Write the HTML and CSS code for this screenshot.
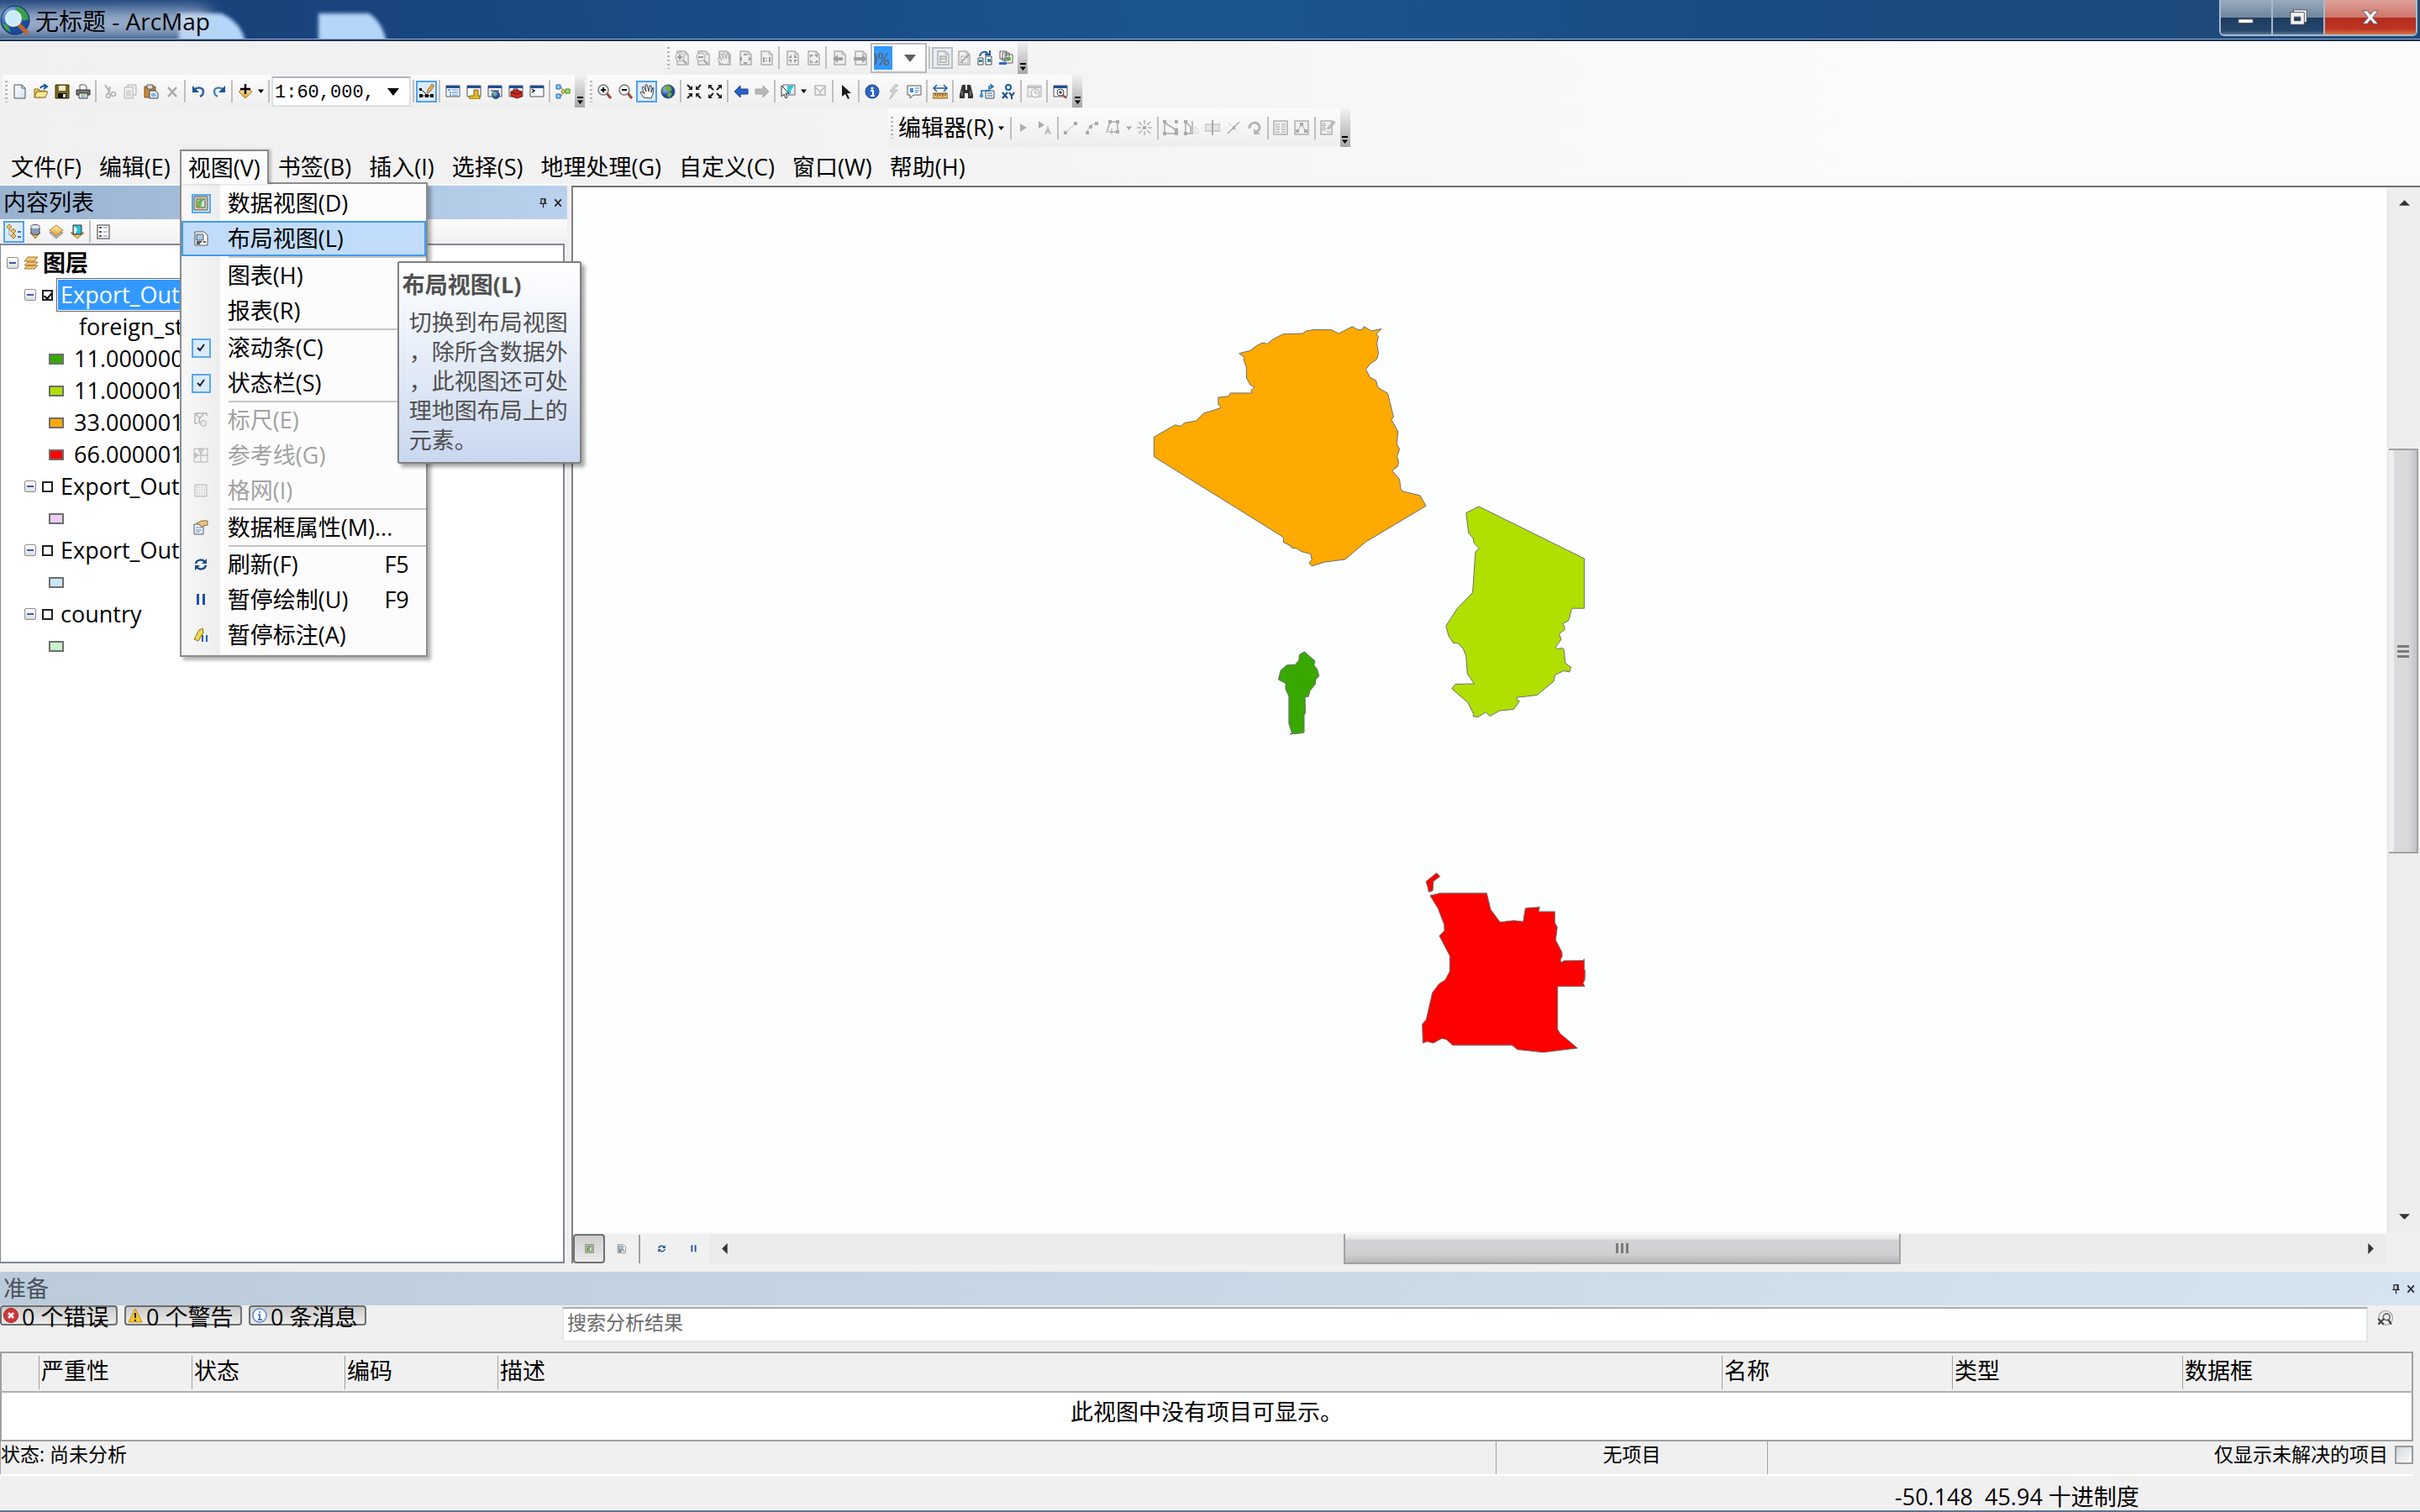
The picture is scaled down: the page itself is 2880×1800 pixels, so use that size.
FILE: index.html
```html
<!DOCTYPE html>
<html lang="zh-CN">
<head>
    <meta charset="UTF-8">
    <meta name="viewport" content="width=device-width, initial-scale=1.0">
    <title>无标题 - ArcMap</title>
    <link rel="stylesheet" href="styles.css">
</head>
<body>
    <!-- Icon library -->
    <svg class="sprite" width="0" height="0" aria-hidden="true">
        <defs>
            <linearGradient id="gold" x1="0" y1="0" x2="0" y2="1"><stop offset="0" stop-color="#fff0b0"/><stop offset="1" stop-color="#e0a030"/></linearGradient>
            <linearGradient id="sheet" x1="0" y1="0" x2="1" y2="1"><stop offset="0" stop-color="#fff"/><stop offset="1" stop-color="#cfe3f5"/></linearGradient>
            <radialGradient id="globe" cx=".35" cy=".3"><stop offset="0" stop-color="#9fd4ff"/><stop offset="1" stop-color="#1b4a9a"/></radialGradient>
        </defs>
        <symbol id="i-new" viewBox="0 0 18 18"><path d="M2 1h9l4 4v12H2z" fill="url(#sheet)" stroke="#555"/><path d="M11 1v4h4" fill="none" stroke="#555"/></symbol>
        <symbol id="i-open" viewBox="0 0 18 18"><path d="M1 16V6h5l1 2h7v8z" fill="#e8c850" stroke="#8a6a1a"/><path d="M1 16l3-7h13l-3 7z" fill="#fbe79a" stroke="#8a6a1a"/><path d="M8 5c1-2 3-3 6-2M12 0l4 3-4 3" fill="none" stroke="#1a5a9c" stroke-width="2"/></symbol>
        <symbol id="i-save" viewBox="0 0 18 18"><path d="M1 1h16v16H1z" fill="#7a6a1c" stroke="#3a3208"/><path d="M5 2h8v6H5z" fill="#f2ecd0"/><path d="M4 11h10v6H4z" fill="#111"/><path d="M10 12h3v4h-3z" fill="#eee"/></symbol>
        <symbol id="i-print" viewBox="0 0 18 18"><path d="M5 7V1h6l2 2v4" fill="#fff" stroke="#555"/><path d="M1 7h16v6H1z" fill="#777" stroke="#333"/><path d="M4 11h10v6H4z" fill="#fff" stroke="#333"/><path d="M6 13h6" stroke="#4aa04a"/><path d="M6 15h6" stroke="#3a7acc"/></symbol>
        <symbol id="i-cut" viewBox="0 0 18 18"><path d="M4 1l6 9M10 3L8 11" stroke="#b2b2b2" stroke-width="2"/><circle cx="14" cy="12" r="2.500" fill="none" stroke="#b2b2b2" stroke-width="1.500"/><circle cx="8" cy="14" r="2.500" fill="none" stroke="#b2b2b2" stroke-width="1.500"/></symbol>
        <symbol id="i-copy" viewBox="0 0 18 18"><path d="M6 1h10v12H6z" fill="#eee" stroke="#b0b0b0"/><path d="M2 4h10v13H2z" fill="#f4f4f4" stroke="#b0b0b0"/><path d="M4 8h6M4 10h6M4 12h6M4 14h6" stroke="#b8b8b8"/></symbol>
        <symbol id="i-paste" viewBox="0 0 18 18"><path d="M1 3h13v13H1z" fill="#c88a3c" stroke="#7a4a10"/><path d="M4 1h7v5H4z" fill="#ddd" stroke="#555"/><path d="M7 8h7l3 3v6H7z" fill="#e4f1fc" stroke="#445"/><path d="M9 12h5M9 14h6" stroke="#3a7acc"/></symbol>
        <symbol id="i-del" viewBox="0 0 18 18"><path d="M4 4l10 11M14 4L4 15" stroke="#a8a8a8" stroke-width="2.500"/></symbol>
        <symbol id="i-undo" viewBox="0 0 18 18"><path d="M4 7c4-4 11-3 11 2 0 3-2 5-4 6" fill="none" stroke="#2a62a4" stroke-width="2.500"/><path d="M2 2v8h8z" fill="#1a5296"/></symbol>
        <symbol id="i-redo" viewBox="0 0 18 18"><path d="M14 7C10 3 3 4 3 9c0 3 2 5 4 6" fill="none" stroke="#4a86ba" stroke-width="2.500"/><path d="M16 2v8H8z" fill="#1a5296"/></symbol>
        <symbol id="i-add" viewBox="0 0 18 18"><path d="M1 9l8-4 8 4-8 8z" fill="url(#gold)" stroke="#a87820"/><path d="M9 0v12M3 6h12" stroke="#000" stroke-width="2.500"/></symbol>
        <symbol id="i-edit" viewBox="0 0 18 18"><path d="M2 6l7 7M2 14h13" fill="none" stroke="#222"/><path d="M0 5h3v3H0zM0 12h4v4H0zM7 12h4v4H7zM13 12h4v4h-4z" fill="#111"/><path d="M9 11l1-4 5-7 3 2-5 7z" fill="#e8a850" stroke="#9a6020" stroke-width=".8"/></symbol>
        <symbol id="i-win" viewBox="0 0 18 18"><path d="M1 2h16v13H1z" fill="#f6f8fb" stroke="#555"/><path d="M1 2h16v3H1z" fill="#1f4f96"/></symbol>
        <symbol id="i-toc" viewBox="0 0 18 18"><use href="#i-win"/><path d="M3 7h3M5 10h2M5 13h2" stroke="#3a7acc" stroke-width="1.500"/><path d="M8 7h7M8 10h7M8 13h7" stroke="#3a8adc"/></symbol>
        <symbol id="i-catalog" viewBox="0 0 18 18"><use href="#i-win"/><path d="M9 7h5v7h2v4H4v-4h5z" fill="#e0b820" stroke="#8a6a10"/></symbol>
        <symbol id="i-search" viewBox="0 0 18 18"><use href="#i-win"/><path d="M4 8h10" stroke="#888" stroke-width="2"/><circle cx="10" cy="13" r="4.500" fill="url(#globe)" stroke="#357"/><path d="M8 11l3 1-1 4z" fill="#6ab83a"/></symbol>
        <symbol id="i-toolbox" viewBox="0 0 18 18"><use href="#i-win"/><path d="M3 9l7-2 6 2v6l-6 2-7-3z" fill="#cc2a20" stroke="#7a1410"/><path d="M6 8V6h5v2M3 10l7 2 6-2" fill="none" stroke="#611"/></symbol>
        <symbol id="i-python" viewBox="0 0 18 18"><use href="#i-win"/><path d="M3 6l3 2-3 2" fill="none" stroke="#111" stroke-width="1.500"/></symbol>
        <symbol id="i-model" viewBox="0 0 18 18"><path d="M4 4h3l4 5h3M4 14h3l3-5" fill="none" stroke="#777"/><path d="M1 1h5v5H1zM1 12h5v5H1z" fill="#8cc8f8" stroke="#1a6aae"/><path d="M12 6h5v5h-5z" fill="#a4e070" stroke="#3a8a1a"/><circle cx="9" cy="9" r="2" fill="#f6d860" stroke="#977a10"/></symbol>
        <symbol id="i-lens" viewBox="0 0 18 18"><path d="M11 11l5 6" stroke="#a0402c" stroke-width="3"/><circle cx="7" cy="7" r="6" fill="#f4f6f8" stroke="#777" stroke-width="1.500"/></symbol>
        <symbol id="i-zin" viewBox="0 0 18 18"><use href="#i-lens"/><path d="M7 4v6M4 7h6" stroke="#111" stroke-width="2"/></symbol>
        <symbol id="i-zout" viewBox="0 0 18 18"><use href="#i-lens"/><path d="M4 7h6" stroke="#111" stroke-width="2"/></symbol>
        <symbol id="i-hand" viewBox="0 0 18 18"><path d="M5 16L1 10l2-1 3 3L3 4l2-1 3 6-1-8h2l2 8 1-7h2v8l2-6 1 1-1 7-2 5z" fill="#fff" stroke="#444"/></symbol>
        <symbol id="i-globe" viewBox="0 0 18 18"><circle cx="9" cy="9" r="8" fill="url(#globe)" stroke="#456"/><path d="M5 3c4-2 9 1 8 5l-4 1-4-3zM10 10l4 1-3 5-3-2z" fill="#7cae38"/></symbol>
        <symbol id="i-fixin" viewBox="0 0 18 18"><path d="M1 1l5 5M17 1l-5 5M1 17l5-5M17 17l-5-5" stroke="#222" stroke-width="2"/><path d="M7 2v5H2zM11 2v5h5zM7 16v-5H2zM11 16v-5h5z" fill="#222"/></symbol>
        <symbol id="i-fixout" viewBox="0 0 18 18"><path d="M2 2l5 5M16 2l-5 5M2 16l5-5M16 16l-5-5" stroke="#222" stroke-width="2"/><path d="M1 6V1h5zM17 6V1h-5zM1 12v5h5zM17 12v5h-5z" fill="#222"/></symbol>
        <symbol id="i-back" viewBox="0 0 18 18"><path d="M1 9l7-7v4h9v6H8v4z" fill="#2a62c8" stroke="#1a3a88"/></symbol>
        <symbol id="i-fwd" viewBox="0 0 18 18"><path d="M17 9l-7-7v4H1v6h9v4z" fill="#b8b8b8" stroke="#a6a6a6"/></symbol>
        <symbol id="i-select" viewBox="0 0 18 18"><path d="M3 1h14v12H3z" fill="#eee" stroke="#666"/><path d="M8 2h8l-4 6v4H8z" fill="#30c8e0"/><path d="M1 2v13l3-3 2 5 2-1-2-5h4z" fill="#fff" stroke="#333"/></symbol>
        <symbol id="i-clear" viewBox="0 0 18 18"><path d="M3 2h12v11H3zM3 4l6 5 6-6M9 9v4" fill="none" stroke="#b8b8b8" stroke-width="1.500"/></symbol>
        <symbol id="i-arrow" viewBox="0 0 18 18"><path d="M4 1v14l4-3 3 6 2-1-3-6h5z" fill="#1b1b1b"/></symbol>
        <symbol id="i-info" viewBox="0 0 18 18"><circle cx="9" cy="9" r="8" fill="#2a66c0" stroke="#1a3f86"/><circle cx="9" cy="5" r="1.500" fill="#fff"/><path d="M7 8h3v6M7 14h5" fill="none" stroke="#fff" stroke-width="2"/></symbol>
        <symbol id="i-bolt" viewBox="0 0 18 18"><path d="M11 1L5 9h4l-4 9 9-11H9l6-6z" fill="#ddd" stroke="#b0b0b0"/></symbol>
        <symbol id="i-popup" viewBox="0 0 18 18"><path d="M1 2h16v11H8l-4 4v-4H1z" fill="#fff" stroke="#555"/><path d="M4 5h4v5H4z" fill="#3a8ada"/><path d="M10 5h5M10 8h5M10 10h3" stroke="#3a7acc"/></symbol>
        <symbol id="i-measure" viewBox="0 0 18 18"><path d="M0 11h18v6H0z" fill="#e8b870" stroke="#8a5a20"/><path d="M3 11v3M6 11v4M9 11v3M12 11v4M15 11v3" stroke="#5a3a10"/><path d="M2 5h14M5 1L1 5l4 4M13 1l4 4-4 4" fill="none" stroke="#1a5a9c" stroke-width="1.500"/></symbol>
        <symbol id="i-find" viewBox="0 0 18 18"><path d="M4 1h4v6h2V1h4l3 12v4h-6v-6H7v6H1v-4z" fill="#333"/><path d="M4 8v6M14 8v6" stroke="#999"/></symbol>
        <symbol id="i-route" viewBox="0 0 18 18"><path d="M7 8h10v9H7z" fill="#e8f2fb" stroke="#456"/><path d="M9 11h6M9 14h6" stroke="#567"/><path d="M2 14V8h9V3h4M12 0l4 3-4 3" fill="none" stroke="#1a6aae" stroke-width="1.500"/><path d="M0 12h4v4H0z" fill="#49c"/></symbol>
        <symbol id="i-xy" viewBox="0 0 18 18"><circle cx="9" cy="4" r="3" fill="#dff" stroke="#1a5a9c" stroke-width="2"/><path d="M2 10l6 7M8 10l-6 7M10 10l3 4 3-4M13 13v5" fill="none" stroke="#1a4a86" stroke-width="2"/></symbol>
        <symbol id="i-time" viewBox="0 0 18 18"><path d="M1 2h16v13H1z" fill="#eee" stroke="#b0b0b0"/><path d="M1 3h16v2H1z" fill="#c0c0c0"/><circle cx="10" cy="11" r="5" fill="#f2f2f2" stroke="#aaa"/><path d="M10 8v3h3" fill="none" stroke="#aaa"/></symbol>
        <symbol id="i-viewer" viewBox="0 0 18 18"><use href="#i-win"/><path d="M11 12l5 5" stroke="#a0402c" stroke-width="2"/><circle cx="9" cy="10" r="4" fill="#fff" stroke="#444"/><path d="M9 8v4M7 10h4" stroke="#111"/></symbol>
        <symbol id="i-page" viewBox="0 0 18 18"><path d="M3 1h9l4 4v12H3z" fill="#efefef" stroke="#b0b0b0" stroke-width="1.500"/><path d="M12 1v4h4" fill="none" stroke="#b0b0b0"/></symbol>
        <symbol id="i-pzin" viewBox="0 0 18 18"><use href="#i-page"/><circle cx="6" cy="8" r="5" fill="#eee" stroke="#a0a0a0"/><path d="M6 5v6M3 8h6M10 12l4 4" stroke="#999" stroke-width="2"/></symbol>
        <symbol id="i-pzout" viewBox="0 0 18 18"><use href="#i-page"/><circle cx="6" cy="8" r="5" fill="#eee" stroke="#a0a0a0"/><path d="M3 8h6M10 12l4 4" stroke="#999" stroke-width="2"/></symbol>
        <symbol id="i-phand" viewBox="0 0 18 18"><use href="#i-page"/><path d="M5 16L1 10l2-1 3 3L3 5l2-1 3 6-1-7h2l2 7 1-6h2v7l2-5-1 6-2 5z" fill="#eee" stroke="#aaa"/></symbol>
        <symbol id="i-pfull" viewBox="0 0 18 18"><use href="#i-page"/><path d="M9 3l3 3H6zM9 17l3-3H6zM2 10l3-3v6zM16 10l-3-3v6z" fill="#999"/></symbol>
        <symbol id="i-p11" viewBox="0 0 18 18"><use href="#i-page"/><path d="M6 8v6M13 8v6M9 9v1M9 12v1" stroke="#999" stroke-width="2"/></symbol>
        <symbol id="i-pin" viewBox="0 0 18 18"><use href="#i-page"/><path d="M8 5v4H4zM11 5v4h4zM8 15v-4H4zM11 15v-4h4z" fill="#999"/></symbol>
        <symbol id="i-pout" viewBox="0 0 18 18"><use href="#i-page"/><path d="M5 9V5h4zM14 9V5h-4zM5 11v4h4zM14 11v4h-4z" fill="#999"/></symbol>
        <symbol id="i-pback" viewBox="0 0 18 18"><use href="#i-page"/><path d="M1 10l6-5v3h6v4H7v3z" fill="#a0a0a0"/></symbol>
        <symbol id="i-pfwd" viewBox="0 0 18 18"><use href="#i-page"/><path d="M17 10l-6-5v3H1v4h10v3z" fill="#a0a0a0"/></symbol>
        <symbol id="i-pdraft" viewBox="0 0 18 18"><use href="#i-page"/><path d="M6 7h7v7H6zM7 10h5" fill="none" stroke="#aaa" stroke-width="1.500"/></symbol>
        <symbol id="i-pfocus" viewBox="0 0 18 18"><use href="#i-page"/><path d="M6 7h8v8H6z" fill="none" stroke="#999" stroke-dasharray="2 1"/><path d="M5 15L15 5" stroke="#aaa" stroke-width="2"/></symbol>
        <symbol id="i-swap" viewBox="0 0 18 18"><path d="M1 9h6v8H1zM10 7h7v10h-7z" fill="#fff" stroke="#444"/><path d="M12 10h4v4h-4zM2 11h4v3H2z" fill="#38a"/><path d="M3 7c1-6 8-7 10-2M9 5h6V0" fill="none" stroke="#1a5a9c" stroke-width="2"/></symbol>
        <symbol id="i-ddp" viewBox="0 0 18 18"><path d="M2 1h8v9H2zM5 3h8v9H5zM8 5h9v10H8z" fill="#fff" stroke="#555"/><path d="M10 8h5v4h-5z" fill="#6a4"/><path d="M1 14h9v3H1z" fill="#2a6ad0"/></symbol>
        <symbol id="i-e1" viewBox="0 0 18 18"><path d="M5 4v10l8-5z" fill="#b0b0b0"/></symbol>
        <symbol id="i-e2" viewBox="0 0 18 18"><path d="M2 1v9l7-4z" fill="#aaa"/><path d="M10 17l3-8 3 8M11 14h4" fill="none" stroke="#bbb" stroke-width="2"/></symbol>
        <symbol id="i-e3" viewBox="0 0 18 18"><path d="M3 15L15 4" stroke="#bbb"/><path d="M1 13h4v4H1zM13 2h4v4h-4z" fill="#aaa"/></symbol>
        <symbol id="i-e4" viewBox="0 0 18 18"><path d="M4 15c0-5 4-11 12-11" fill="none" stroke="#bbb"/><path d="M2 13h4v4H2zM13 2h4v4h-4zM6 6h4v4H6z" fill="#aaa"/></symbol>
        <symbol id="i-e5" viewBox="0 0 18 18"><path d="M2 15L6 2h9v12h-3" fill="none" stroke="#aaa" stroke-width="1.500"/><path d="M4 0h4v4H4zM13 0h4v4h-4zM13 12h4v4h-4z" fill="#aaa"/><path d="M8 10v7M4 14h8" stroke="#999"/></symbol>
        <symbol id="i-e6" viewBox="0 0 18 18"><path d="M9 0v5M9 13v5M0 9h5M13 9h5M2 2l4 4M12 12l4 4M16 2l-4 4M6 12l-4 4" stroke="#b0b0b0" stroke-width="1.500"/><path d="M7 7h4v4H7z" fill="#aaa"/></symbol>
        <symbol id="i-e7" viewBox="0 0 18 18"><path d="M2 2v14h14V12L2 3" fill="none" stroke="#aaa" stroke-width="1.500"/><path d="M2 2h14v10" fill="none" stroke="#bbb" stroke-dasharray="1 2"/><path d="M0 0h4v4H0zM14 0h4v4h-4zM14 10h4v4h-4zM0 14h4v4H0zM14 14h4v4h-4z" fill="#aaa"/></symbol>
        <symbol id="i-e8" viewBox="0 0 18 18"><path d="M2 16V2l6 6v8zM10 1v16" fill="none" stroke="#aaa" stroke-width="1.500"/><path d="M13 8l4 3v5h-4z" fill="none" stroke="#bbb" stroke-dasharray="1 1"/><path d="M0 0h4v4H0zM0 14h4v4H0z" fill="#aaa"/></symbol>
        <symbol id="i-e9" viewBox="0 0 18 18"><path d="M0 5h18v8H0z" fill="#e4e4e4" stroke="#b0b0b0"/><path d="M9 0v18" stroke="#aaa" stroke-width="2"/></symbol>
        <symbol id="i-e10" viewBox="0 0 18 18"><path d="M2 16L16 2" stroke="#aaa" stroke-width="1.500"/><path d="M3 3l12 12" stroke="#bbb" stroke-dasharray="5 3"/><path d="M8 7h3v4H8z" fill="#aaa"/></symbol>
        <symbol id="i-e11" viewBox="0 0 18 18"><path d="M3 10c-1-9 12-9 12-1 0 3-2 4-4 5" fill="none" stroke="#b4b4b4" stroke-width="3"/><path d="M8 10v7h8z" fill="#b4b4b4"/></symbol>
        <symbol id="i-e12" viewBox="0 0 18 18"><path d="M1 1h16v16H1z" fill="#f0f0f0" stroke="#b0b0b0" stroke-width="1.500"/><path d="M3 5h5M3 8h5M3 11h5M3 14h5M10 5h5M10 8h5M10 11h5M10 14h5" stroke="#bbb" stroke-width="1.500"/></symbol>
        <symbol id="i-e13" viewBox="0 0 18 18"><path d="M1 1h16v16H1z" fill="#f0f0f0" stroke="#b0b0b0" stroke-width="1.500"/><path d="M4 13l5-8 5 8" fill="none" stroke="#aaa"/><path d="M2 11h4v4H2zM7 3h4v4H7zM12 11h4v4h-4z" fill="#aaa"/></symbol>
        <symbol id="i-e14" viewBox="0 0 18 18"><path d="M1 1h13v16H1z" fill="#f0f0f0" stroke="#b0b0b0" stroke-width="1.500"/><path d="M3 4h3v3H3zM3 9h3v3H3zM8 10h4M8 14h4" fill="none" stroke="#aaa"/><path d="M9 9l7-8 2 2-7 7z" fill="#c4c4c4" stroke="#aaa"/></symbol>
        <symbol id="i-diamond" viewBox="0 0 18 18"><path d="M1 10l8-6 8 6-8 7z" fill="#b8b8b8" stroke="#888"/><path d="M1 7l8-6 8 6-8 7z" fill="url(#gold)" stroke="#b0802a"/></symbol>
        <symbol id="i-bytree" viewBox="0 0 18 18"><path d="M3 5v8h5M3 7h4" fill="none" stroke="#999"/><path d="M0 3l3-3 3 3-3 3zM5 8l3-3 3 3-3 3zM5 14l3-3 3 3-3 3z" fill="#eec060" stroke="#a87820"/><path d="M13 9h4M13 15h4" stroke="#2a7aba" stroke-width="2"/></symbol>
        <symbol id="i-bysource" viewBox="0 0 18 18"><path d="M3 10l6 7 6-7z" fill="#e8b850" stroke="#a87820"/><path d="M4 2c2-2 8-2 10 0v9c-2 2-8 2-10 0z" fill="#8a9cb8" stroke="#445"/><ellipse cx="9" cy="3" rx="5" ry="2" fill="#dfe8f2"/></symbol>
        <symbol id="i-bysel" viewBox="0 0 18 18"><path d="M1 10l8 7 8-7z" fill="#eec060" stroke="#a87820"/><path d="M4 1h10v11H4z" fill="#2ac0da" stroke="#333"/><path d="M5 2l4 4-2 5H5z" fill="#eee"/></symbol>
        <symbol id="i-options" viewBox="0 0 18 18"><path d="M2 1h14v16H2z" fill="#fff" stroke="#777" stroke-width="1.500"/><path d="M4 4h3M4 9h3M4 14h3" stroke="#555" stroke-width="2"/><path d="M9 4h5M9 9h5M9 14h5" stroke="#6a8ab0"/></symbol>
        <symbol id="i-layers" viewBox="0 0 18 18"><path d="M1 16l4-4h12l-4 4zM1 12l4-4h12l-4 4zM1 7l4-5h12l-4 5z" fill="#f2c878" stroke="#a8702a"/></symbol>
        <symbol id="i-dataview" viewBox="0 0 18 18"><path d="M1 1h16v16H1z" fill="#d8cfae" stroke="#555"/><path d="M4 4h10v10H4z" fill="#c4e8f8" stroke="#555"/><path d="M4 14V7l4-2 5-1-3 4-1 6z" fill="#7aae40"/></symbol>
        <symbol id="i-layout" viewBox="0 0 18 18"><path d="M2 1h11l4 4v12H2z" fill="#fff" stroke="#555"/><path d="M4 4h8v7H4z" fill="#a8cce8" stroke="#555"/><path d="M4 13h6M4 15h4M12 13h3" stroke="#222" stroke-width="1.500"/></symbol>
        <symbol id="i-ruler" viewBox="0 0 18 18"><path d="M2 1h14v3M2 1v12h3M3 2l5 5 4-5M7 7v5l5 3" fill="none" stroke="#b4b4b4" stroke-width="1.500"/><circle cx="12" cy="13" r="3.500" fill="#eee" stroke="#b0b0b0"/></symbol>
        <symbol id="i-guide" viewBox="0 0 18 18"><path d="M1 1h16v16H1z" fill="#f0f0f0" stroke="#b4b4b4"/><path d="M9 2v15M1 9h16M6 2h6L9 7zM2 6v6l4-3z" fill="none" stroke="#b0b0b0"/></symbol>
        <symbol id="i-grid" viewBox="0 0 18 18"><path d="M2 2h14v14H2z" fill="#eee" stroke="#b4b4b4"/><path d="M4 5h10M4 8h10M4 11h10M4 14h10" stroke="#bbb" stroke-dasharray="1 2"/></symbol>
        <symbol id="i-props" viewBox="0 0 18 18"><path d="M1 5h11v12H1z" fill="#e8f2fc" stroke="#556"/><path d="M3 9h7M3 12h7M3 14h5" stroke="#6a92c0"/><path d="M4 4l6-3h7v5l-5 1-2 2-2-3z" fill="#ecc080" stroke="#8a6a3a"/></symbol>
        <symbol id="i-refresh" viewBox="0 0 18 18"><path d="M3 8c1-5 8-6 11-2M15 10c-1 5-8 6-11 2" fill="none" stroke="#1a4f8a" stroke-width="2.500"/><path d="M16 2v6h-6zM2 16v-6h6z" fill="#1a4f8a"/></symbol>
        <symbol id="i-pause" viewBox="0 0 18 18"><path d="M4 2h3v13H4zM11 2h3v13h-3z" fill="#1f50a8"/></symbol>
        <symbol id="i-plabel" viewBox="0 0 18 18"><path d="M1 14L7 3l4-2 1 5-6 10z" fill="#f0d850" stroke="#8a7010"/><path d="M10 9h2v8h-2zM15 9h2v8h-2z" fill="#1f60c0"/></symbol>
        <symbol id="i-check" viewBox="0 0 18 18"><path d="M5 9l3 3 5-7" fill="none" stroke="#0b2040" stroke-width="2"/></symbol>
        <symbol id="i-thumb" viewBox="0 0 18 18"><path d="M6 10V3h6v7M4 10h10M9 10v6M11 3v7" fill="none" stroke="#222" stroke-width="1.500"/></symbol>
        <symbol id="i-x" viewBox="0 0 18 18"><path d="M4 4l9 10M13 4L4 14" stroke="#222" stroke-width="2"/></symbol>
        <symbol id="i-caret" viewBox="0 0 18 18"><path d="M2 5h14l-7 9z" fill="currentColor"/></symbol>
        <symbol id="i-error" viewBox="0 0 18 18"><circle cx="9" cy="9" r="8.500" fill="#d03838" stroke="#a01a1a"/><path d="M6 6l6 6M12 6l-6 6" stroke="#fff" stroke-width="2.500"/></symbol>
        <symbol id="i-warn" viewBox="0 0 18 18"><path d="M9 1l8 16H1z" fill="#f8c830" stroke="#c08a10"/><path d="M9 6v6M9 14v2" stroke="#111" stroke-width="2"/></symbol>
        <symbol id="i-msg" viewBox="0 0 18 18"><circle cx="9" cy="9" r="8" fill="#fff" stroke="#5a8ad0" stroke-width="1.500"/><path d="M9 4v2M7 8h2v6M7 14h5" fill="none" stroke="#2a5ab8" stroke-width="1.500"/></symbol>
        <symbol id="i-clearfind" viewBox="0 0 18 18"><circle cx="10" cy="8" r="7.500" fill="#eee" stroke="#999"/><circle cx="11" cy="7" r="3.500" fill="none" stroke="#666" stroke-width="1.500"/><path d="M13 10l3 5M2 9l6 6M8 9l-6 6" stroke="#444" stroke-width="2"/></symbol>
    </svg>

    <!-- Title bar -->
    <header class="titlebar">
        <svg class="titlebar-glass" width="520" height="48" aria-hidden="true">
            <defs><filter id="soft" x="-20%" y="-50%" width="140%" height="200%"><feGaussianBlur stdDeviation="9"/></filter><filter id="edge"><feGaussianBlur stdDeviation="2"/></filter></defs>
            <path d="M213 50V16h50q24 10 29 34zM379 50V16h60q16 10 21 34z" fill="#b4d6fa" filter="url(#edge)"/>
            <rect x="-20" y="10" width="272" height="34" rx="16" fill="#c3d2e6" opacity=".75" filter="url(#soft)"/>
        </svg>
        <svg class="app-icon" viewBox="0 0 36 36" aria-hidden="true">
            <circle cx="18" cy="18" r="17" fill="url(#globe)" stroke="#0d2f60"/>
            <path d="M20 2c8 1 14 8 14 15l-6 2-4-7-6-3zM3 22l6 2 4 8c-5-1-9-5-10-10z" fill="#3ba04a"/>
            <path d="M22 23l11 11" stroke="#c0622a" stroke-width="5"/>
            <circle cx="16" cy="16" r="9" fill="#c8ecf8" stroke="#e8eef4" stroke-width="2"/>
        </svg>
        <h1>无标题 - ArcMap</h1>
        <div class="window-buttons">
            <button type="button" class="win-min" aria-label="最小化"><svg viewBox="0 0 24 24"><path d="M2 14h19v5H2z" fill="#fff" stroke="#445"/></svg></button>
            <button type="button" class="win-restore" aria-label="还原"><svg viewBox="0 0 24 24"><path d="M6 2h17v16h-4V6H6z" fill="#fff" stroke="#445"/><path d="M2 5h18v16H2zM7 11v5h8v-5z" fill="#f2f2f2" stroke="#445" fill-rule="evenodd"/></svg></button>
            <button type="button" class="win-close" aria-label="关闭"><svg viewBox="0 0 24 24"><path d="M2 3h6l4 5 4-5h6l-7 9 7 8h-6l-4-5-4 5H2l7-8z" fill="#f4f4f4" stroke="#556"/></svg></button>
        </div>
    </header>

    <!-- Toolbars -->
    <div class="toolbars">
        <div class="toolbar toolbar-layout">
            <span class="grip"></span>
            <button type="button" aria-label="页面放大"><svg><use href="#i-pzin"/></svg></button>
            <button type="button" aria-label="页面缩小"><svg><use href="#i-pzout"/></svg></button>
            <button type="button" aria-label="页面平移"><svg><use href="#i-phand"/></svg></button>
            <button type="button" aria-label="缩放整页"><svg><use href="#i-pfull"/></svg></button>
            <button type="button" aria-label="缩放至 100%"><svg><use href="#i-p11"/></svg></button>
            <span class="sep"></span>
            <button type="button" aria-label="固定比例放大"><svg><use href="#i-pin"/></svg></button>
            <button type="button" aria-label="固定比例缩小"><svg><use href="#i-pout"/></svg></button>
            <span class="sep"></span>
            <button type="button" aria-label="返回"><svg><use href="#i-pback"/></svg></button>
            <button type="button" aria-label="前进"><svg><use href="#i-pfwd"/></svg></button>
            <span class="combo combo-percent"><select aria-label="页面缩放"><option>0%</option></select><svg><use href="#i-caret"/></svg></span>
            <span class="sep"></span>
            <button type="button" class="pressed-off" aria-label="草图模式"><svg><use href="#i-pdraft"/></svg></button>
            <button type="button" aria-label="聚焦数据框"><svg><use href="#i-pfocus"/></svg></button>
            <button type="button" aria-label="更改布局"><svg><use href="#i-swap"/></svg></button>
            <button type="button" aria-label="数据驱动页面"><svg><use href="#i-ddp"/></svg></button>
            <button type="button" class="overflow" aria-label="更多"><i></i><svg><use href="#i-caret"/></svg></button>
        </div>

        <div class="toolbar-row">
            <div class="toolbar">
                <span class="grip"></span>
                <button type="button" aria-label="新建"><svg><use href="#i-new"/></svg></button>
                <button type="button" aria-label="打开"><svg><use href="#i-open"/></svg></button>
                <button type="button" aria-label="保存"><svg><use href="#i-save"/></svg></button>
                <button type="button" aria-label="打印"><svg><use href="#i-print"/></svg></button>
                <span class="sep"></span>
                <button type="button" aria-label="剪切"><svg><use href="#i-cut"/></svg></button>
                <button type="button" aria-label="复制"><svg><use href="#i-copy"/></svg></button>
                <button type="button" aria-label="粘贴"><svg><use href="#i-paste"/></svg></button>
                <button type="button" aria-label="删除"><svg><use href="#i-del"/></svg></button>
                <span class="sep"></span>
                <button type="button" aria-label="撤消"><svg><use href="#i-undo"/></svg></button>
                <button type="button" aria-label="恢复"><svg><use href="#i-redo"/></svg></button>
                <span class="sep"></span>
                <button type="button" aria-label="添加数据"><svg><use href="#i-add"/></svg></button>
                <button type="button" class="drop" aria-label="添加数据选项"><svg><use href="#i-caret"/></svg></button>
                <span class="sep"></span>
                <span class="combo combo-scale"><select aria-label="地图比例"><option>1:60,000,</option></select><svg><use href="#i-caret"/></svg></span>
                <span class="sep"></span>
                <button type="button" class="pressed" aria-label="编辑器工具条"><svg><use href="#i-edit"/></svg></button>
                <span class="sep"></span>
                <button type="button" aria-label="内容列表"><svg><use href="#i-toc"/></svg></button>
                <button type="button" aria-label="目录"><svg><use href="#i-catalog"/></svg></button>
                <button type="button" aria-label="搜索"><svg><use href="#i-search"/></svg></button>
                <button type="button" aria-label="工具箱"><svg><use href="#i-toolbox"/></svg></button>
                <button type="button" aria-label="Python"><svg><use href="#i-python"/></svg></button>
                <span class="sep"></span>
                <button type="button" aria-label="模型构建器"><svg><use href="#i-model"/></svg></button>
                <button type="button" class="overflow" aria-label="更多"><i></i><svg><use href="#i-caret"/></svg></button>
            </div>
            <div class="toolbar">
                <span class="grip"></span>
                <button type="button" aria-label="放大"><svg><use href="#i-zin"/></svg></button>
                <button type="button" aria-label="缩小"><svg><use href="#i-zout"/></svg></button>
                <button type="button" class="pressed" aria-label="平移"><svg><use href="#i-hand"/></svg></button>
                <button type="button" aria-label="全图"><svg><use href="#i-globe"/></svg></button>
                <span class="sep"></span>
                <button type="button" aria-label="固定比例放大"><svg><use href="#i-fixin"/></svg></button>
                <button type="button" aria-label="固定比例缩小"><svg><use href="#i-fixout"/></svg></button>
                <span class="sep"></span>
                <button type="button" aria-label="返回"><svg><use href="#i-back"/></svg></button>
                <button type="button" aria-label="前进"><svg><use href="#i-fwd"/></svg></button>
                <span class="sep"></span>
                <button type="button" aria-label="选择要素"><svg><use href="#i-select"/></svg></button>
                <button type="button" class="drop" aria-label="选择方式"><svg><use href="#i-caret"/></svg></button>
                <button type="button" aria-label="清除所选"><svg><use href="#i-clear"/></svg></button>
                <span class="sep"></span>
                <button type="button" aria-label="选择元素"><svg><use href="#i-arrow"/></svg></button>
                <span class="sep"></span>
                <button type="button" aria-label="识别"><svg><use href="#i-info"/></svg></button>
                <button type="button" aria-label="超链接"><svg><use href="#i-bolt"/></svg></button>
                <button type="button" aria-label="HTML 弹出窗口"><svg><use href="#i-popup"/></svg></button>
                <span class="sep"></span>
                <button type="button" aria-label="测量"><svg><use href="#i-measure"/></svg></button>
                <span class="sep"></span>
                <button type="button" aria-label="查找"><svg><use href="#i-find"/></svg></button>
                <button type="button" aria-label="查找路径"><svg><use href="#i-route"/></svg></button>
                <button type="button" aria-label="转到 XY"><svg><use href="#i-xy"/></svg></button>
                <span class="sep"></span>
                <button type="button" aria-label="时间滑块"><svg><use href="#i-time"/></svg></button>
                <span class="sep"></span>
                <button type="button" aria-label="创建查看器"><svg><use href="#i-viewer"/></svg></button>
                <button type="button" class="overflow" aria-label="更多"><i></i><svg><use href="#i-caret"/></svg></button>
            </div>
        </div>

        <div class="toolbar toolbar-editor">
            <span class="grip"></span>
            <button type="button" class="text-button">编辑器(R)<svg><use href="#i-caret"/></svg></button>
            <span class="sep"></span>
            <button type="button" aria-label="编辑工具"><svg><use href="#i-e1"/></svg></button>
            <button type="button" aria-label="编辑注记"><svg><use href="#i-e2"/></svg></button>
            <span class="sep"></span>
            <button type="button" aria-label="直线段"><svg><use href="#i-e3"/></svg></button>
            <button type="button" aria-label="弧线段"><svg><use href="#i-e4"/></svg></button>
            <button type="button" aria-label="追踪"><svg><use href="#i-e5"/></svg></button>
            <button type="button" class="drop muted" aria-label="追踪选项"><svg><use href="#i-caret"/></svg></button>
            <button type="button" aria-label="点"><svg><use href="#i-e6"/></svg></button>
            <span class="sep"></span>
            <button type="button" aria-label="编辑折点"><svg><use href="#i-e7"/></svg></button>
            <button type="button" aria-label="整形要素"><svg><use href="#i-e8"/></svg></button>
            <button type="button" aria-label="裁剪面"><svg><use href="#i-e9"/></svg></button>
            <button type="button" aria-label="分割"><svg><use href="#i-e10"/></svg></button>
            <button type="button" aria-label="旋转"><svg><use href="#i-e11"/></svg></button>
            <span class="sep"></span>
            <button type="button" aria-label="属性"><svg><use href="#i-e12"/></svg></button>
            <button type="button" aria-label="草图属性"><svg><use href="#i-e13"/></svg></button>
            <span class="sep"></span>
            <button type="button" aria-label="创建要素"><svg><use href="#i-e14"/></svg></button>
            <button type="button" class="overflow" aria-label="更多"><i></i><svg><use href="#i-caret"/></svg></button>
        </div>

        <nav class="menubar">
            <button type="button">文件(F)</button>
            <button type="button">编辑(E)</button>
            <div class="menu-open">
                <button type="button" class="active">视图(V)</button>
                <div class="menu" role="menu">
                    <button type="button" role="menuitem"><span class="mi boxed"><svg><use href="#i-dataview"/></svg></span>数据视图(D)</button>
                    <button type="button" role="menuitem" class="hover"><span class="mi"><svg><use href="#i-layout"/></svg></span>布局视图(L)</button>
                    <hr>
                    <button type="button" role="menuitem"><span class="mi"></span>图表(H)</button>
                    <button type="button" role="menuitem"><span class="mi"></span>报表(R)</button>
                    <hr>
                    <button type="button" role="menuitemcheckbox" aria-checked="true"><span class="mi boxed"><svg><use href="#i-check"/></svg></span>滚动条(C)</button>
                    <button type="button" role="menuitemcheckbox" aria-checked="true"><span class="mi boxed"><svg><use href="#i-check"/></svg></span>状态栏(S)</button>
                    <hr>
                    <button type="button" role="menuitem" disabled><span class="mi"><svg><use href="#i-ruler"/></svg></span>标尺(E)</button>
                    <button type="button" role="menuitem" disabled><span class="mi"><svg><use href="#i-guide"/></svg></span>参考线(G)</button>
                    <button type="button" role="menuitem" disabled><span class="mi"><svg><use href="#i-grid"/></svg></span>格网(I)</button>
                    <hr>
                    <button type="button" role="menuitem"><span class="mi"><svg><use href="#i-props"/></svg></span>数据框属性(M)...</button>
                    <hr>
                    <button type="button" role="menuitem"><span class="mi"><svg><use href="#i-refresh"/></svg></span>刷新(F)<kbd>F5</kbd></button>
                    <button type="button" role="menuitem"><span class="mi"><svg><use href="#i-pause"/></svg></span>暂停绘制(U)<kbd>F9</kbd></button>
                    <button type="button" role="menuitem"><span class="mi"><svg><use href="#i-plabel"/></svg></span>暂停标注(A)</button>
                </div>
                <div class="tooltip" role="tooltip">
                    <strong>布局视图(L)</strong>
                    <p>切换到布局视图<br>，除所含数据外<br>，此视图还可处<br>理地图布局上的<br>元素。</p>
                </div>
            </div>
            <button type="button">书签(B)</button>
            <button type="button">插入(I)</button>
            <button type="button">选择(S)</button>
            <button type="button">地理处理(G)</button>
            <button type="button">自定义(C)</button>
            <button type="button">窗口(W)</button>
            <button type="button">帮助(H)</button>
        </nav>
    </div>

    <main class="workspace">
        <!-- Table of contents -->
        <aside class="toc">
            <div class="panel-title">
                <h2>内容列表</h2>
                <button type="button" aria-label="自动隐藏"><svg><use href="#i-thumb"/></svg></button>
                <button type="button" aria-label="关闭"><svg><use href="#i-x"/></svg></button>
            </div>
            <div class="toolbar toc-tools">
                <button type="button" class="pressed" aria-label="按绘制顺序列出"><svg><use href="#i-bytree"/></svg></button>
                <button type="button" aria-label="按源列出"><svg><use href="#i-bysource"/></svg></button>
                <button type="button" aria-label="按可见性列出"><svg><use href="#i-diamond"/></svg></button>
                <button type="button" aria-label="按选择列出"><svg><use href="#i-bysel"/></svg></button>
                <span class="sep"></span>
                <button type="button" aria-label="选项"><svg><use href="#i-options"/></svg></button>
            </div>
            <ul class="tree">
                <li class="root"><button type="button" class="toggle" aria-label="折叠"></button><svg><use href="#i-layers"/></svg><b>图层</b></li>
                <li class="layer"><button type="button" class="toggle" aria-label="折叠"></button><input type="checkbox" id="layer1" checked><label for="layer1" class="selected">Export_Output</label></li>
                <li class="field">foreign_st</li>
                <li class="class"><i class="swatch dark-green"></i>11.000000</li>
                <li class="class"><i class="swatch lime"></i>11.000001</li>
                <li class="class"><i class="swatch orange"></i>33.000001</li>
                <li class="class"><i class="swatch red"></i>66.000001</li>
                <li class="layer"><button type="button" class="toggle" aria-label="折叠"></button><input type="checkbox" id="layer2"><label for="layer2">Export_Output</label></li>
                <li class="class"><i class="swatch pink"></i></li>
                <li class="layer"><button type="button" class="toggle" aria-label="折叠"></button><input type="checkbox" id="layer3"><label for="layer3">Export_Output</label></li>
                <li class="class"><i class="swatch sky"></i></li>
                <li class="layer"><button type="button" class="toggle" aria-label="折叠"></button><input type="checkbox" id="layer4"><label for="layer4">country</label></li>
                <li class="class"><i class="swatch mint"></i></li>
            </ul>
        </aside>

        <!-- Map -->
        <section class="map-frame">
            <svg class="map" viewBox="682 224 2158 1241" role="img" aria-label="地图">
                <g transform="translate(1340 360) scale(.37 .3444)">
                    <polygon class="orange" points="364,175 400,165 420,148 440,138 455,142 470,128 505,108 568,106 580,97 605,93 660,93 684,106 728,82 746,93 760,93 765,82 790,97 822,90 805,108 812,116 807,140 812,175 807,195 785,212 772,230 785,258 804,268 810,292 842,313 861,396 853,402 875,446 871,488 880,506 872,530 877,552 874,566 856,580 880,610 884,645 892,652 946,666 965,702 772,826 705,887 640,896 598,910 589,900 598,888 594,868 565,860 550,850 532,846 530,840 507,828 506,810 90,532 90,464 158,422 176,427 188,415 225,408 250,382 303,364 304,357 297,352 297,327 330,323 336,312 406,312 402,303 414,291 400,284 388,260 387,222 378,195 381,188"/>
                    <polygon class="lime" points="1094,726 1135,704 1474,884 1474,1056 1437,1056 1431,1064 1427,1088 1422,1100 1406,1108 1412,1128 1393,1145 1400,1163 1382,1190 1388,1197 1404,1193 1409,1200 1413,1245 1431,1260 1427,1276 1408,1272 1380,1286 1376,1308 1322,1356 1257,1364 1256,1370 1266,1377 1247,1405 1202,1410 1170,1429 1158,1415 1132,1432 1116,1429 1118,1422 1100,1382 1048,1334 1060,1318 1120,1317 1098,1282 1094,1222 1085,1196 1068,1177 1053,1176 1038,1152 1029,1117 1066,1056 1115,1002 1124,862 1135,848 1119,830 1117,815 1102,795"/>
                    <polygon class="dark-green" points="574,1206 608,1238 605,1253 615,1266 621,1290 610,1303 609,1318 592,1341 587,1361 576,1362 577,1418 573,1424 573,1485 560,1488 527,1491 534,1488 524,1455 524,1360 513,1335 514,1316 490,1302 498,1270 518,1252 544,1251 556,1236 558,1216"/>
                </g>
                <g transform="translate(1660 1020) scale(.3333)">
                    <polygon class="red" points="126,137 163,128 328,128 342,187 376,232 425,226 458,230 466,182 517,178 513,194 571,194 571,234 580,250 574,296 597,340 597,356 591,365 593,376 604,370 672,369 676,364 676,400 679,404 678,438 672,450 678,461 581,461 581,614 590,630 652,682 530,697 438,687 418,671 206,671 184,651 168,647 137,664 115,658 100,664 98,596 112,580 134,484 158,452 180,438 196,408 196,352 159,281 177,262 176,240 154,183"/>
                    <polygon class="red" points="149,56 161,69 138,86 135,120 121,124 117,105 111,87"/>
                </g>
            </svg>
            <div class="scroll-v">
                <button type="button" aria-label="向上滚动"><svg viewBox="0 0 14 8"><path d="M0 8l7-7 7 7z" fill="#333"/></svg></button>
                <div class="track"><div class="thumb"><i></i><i></i><i></i></div></div>
                <button type="button" aria-label="向下滚动"><svg viewBox="0 0 14 8"><path d="M0 0l7 7 7-7z" fill="#333"/></svg></button>
            </div>
            <div class="map-bar">
                <button type="button" class="view-on" aria-label="数据视图"><svg><use href="#i-dataview"/></svg></button>
                <button type="button" aria-label="布局视图"><svg><use href="#i-layout"/></svg></button>
                <span class="bar-sep"></span>
                <button type="button" aria-label="刷新视图"><svg><use href="#i-refresh"/></svg></button>
                <button type="button" aria-label="暂停绘制"><svg><use href="#i-pause"/></svg></button>
                <div class="scroll-h">
                    <button type="button" aria-label="向左滚动"><svg viewBox="0 0 8 14"><path d="M8 0L1 7l7 7z" fill="#333"/></svg></button>
                    <div class="track"><div class="thumb"><i></i><i></i><i></i></div></div>
                    <button type="button" aria-label="向右滚动"><svg viewBox="0 0 8 14"><path d="M0 0l7 7-7 7z" fill="#333"/></svg></button>
                </div>
            </div>
        </section>
    </main>

    <!-- Prepare window -->
    <section class="prepare">
        <div class="panel-title">
            <h2>准备</h2>
            <button type="button" aria-label="自动隐藏"><svg><use href="#i-thumb"/></svg></button>
            <button type="button" aria-label="关闭"><svg><use href="#i-x"/></svg></button>
        </div>
        <div class="filters">
            <div class="filter-buttons">
                <button type="button"><svg><use href="#i-error"/></svg>0 个错误</button>
                <button type="button"><svg><use href="#i-warn"/></svg>0 个警告</button>
                <button type="button"><svg><use href="#i-msg"/></svg>0 条消息</button>
            </div>
            <input type="text" aria-label="搜索分析结果" placeholder="搜索分析结果">
            <button type="button" class="clear-find" aria-label="清除搜索"><svg><use href="#i-clearfind"/></svg></button>
        </div>
        <table class="results">
            <colgroup><col class="c-icon"><col class="c-small"><col class="c-small"><col class="c-small"><col><col class="c-wide"><col class="c-wide"><col class="c-wide"></colgroup>
            <thead>
                <tr><th></th><th>严重性</th><th>状态</th><th>编码</th><th>描述</th><th>名称</th><th>类型</th><th>数据框</th></tr>
            </thead>
            <tbody>
                <tr><td colspan="8">此视图中没有项目可显示。</td></tr>
            </tbody>
        </table>
        <div class="results-status">
            <span class="state">状态: 尚未分析</span>
            <span class="count">无项目</span>
            <span class="only"><label for="unresolved">仅显示未解决的项目</label><input type="checkbox" id="unresolved"></span>
        </div>
    </section>

    <footer class="statusbar"><span>-50.148&nbsp; 45.94 十进制度</span></footer>
</body>
</html>
```
FILE: styles.css
```css
* {
    margin: 0;
    padding: 0;
    box-sizing: border-box;
}
body {
    font-family: "Open Sans", "Noto Sans CJK SC", sans-serif;
    font-size: 27px;
    line-height: 36px;
    color: #000;
    display: flex;
    flex-direction: column;
    height: 100vh;
    overflow: hidden;
    background: #f0f0f0;
}
button, input, select {
    font: inherit;
    color: inherit;
    border: none;
    background: none;
}
h1, h2 {
    font-size: 27px;
    font-weight: normal;
}
svg {
    display: block;
    flex: none;
    width: 18px;
    height: 18px;
}
.sprite {
    position: absolute;
    width: 0;
    height: 0;
}

/* Title bar */
.titlebar {
    position: relative;
    display: flex;
    align-items: center;
    gap: 6px;
    height: 49px;
    flex: none;
    background: linear-gradient(90deg, #1a3f75, #194681 20%, #1c5590 50%, #1a4a82 75%, #204b78);
    border-bottom: 2px solid #1c3150;
    box-shadow: inset 0 -1px 0 #8fb0d8;
}
.titlebar-glass {
    position: absolute;
    left: 0;
    top: 0;
    width: 520px;
    height: 46px;
}
.app-icon {
    position: relative;
    width: 36px;
    height: 36px;
}
.titlebar h1 {
    position: relative;
    flex: 1;
    padding-top: 3px;
    font-size: 28px;
}
.window-buttons {
    display: flex;
    align-self: flex-start;
    height: 43px;
    margin-right: 3px;
    border: 2px solid #a9bacb;
    border-top: none;
    border-radius: 0 0 6px 6px;
    overflow: hidden;
}
.window-buttons button {
    display: flex;
    align-items: center;
    justify-content: center;
    width: 62px;
    background: linear-gradient(#9aabbd, #70869e 50%, #1b3b60 51%, #26466c 90%, #5c7a9c);
    border-right: 2px solid #a9bacb;
}
.window-buttons svg {
    width: 22px;
    height: 22px;
}
.window-buttons .win-close {
    width: 108px;
    border-right: none;
    background: linear-gradient(#dda09a, #cf766c 50%, #b52c1c 51%, #bd3524 85%, #d8784c);
}

/* Toolbars */
.toolbars {
    flex: none;
    display: flex;
    flex-direction: column;
    align-items: flex-start;
    gap: 1px;
    background: linear-gradient(90deg, #f0f0f0, #f2f2f2 30%, #fbfbfb 80%);
}
.toolbar-row {
    display: flex;
    gap: 3px;
    padding-left: 3px;
}
.toolbar {
    display: flex;
    align-items: center;
    height: 39px;
    background: linear-gradient(#fcfcfc, #eeeeee);
    border-radius: 3px;
}
.toolbar-layout {
    margin-left: 791px;
}
.toolbar-editor {
    margin-left: 1057px;
    height: 46px;
}
.toolbar button {
    display: flex;
    align-items: center;
    justify-content: center;
    width: 25px;
    height: 26px;
    color: #000;
}
.toolbar .grip {
    width: 3px;
    height: 26px;
    margin: 0 2px 0 3px;
    background: repeating-linear-gradient(#b4b4b4 0 2px, transparent 2px 5px);
}
.toolbar .sep {
    width: 2px;
    height: 27px;
    margin: 0 2px;
    background: #c0c0c0;
}
.toolbar .pressed {
    background: #dcebfa;
    border: 2px solid #4ea3f5;
}
.toolbar .pressed-off {
    background: #e9eef4;
    border: 2px solid #b8c0c8;
}
.toolbar .drop {
    width: 13px;
}
.toolbar .drop svg, .text-button svg {
    width: 9px;
    height: 9px;
}
.toolbar .muted {
    color: #a8a8a8;
}
.toolbar .text-button {
    width: auto;
    gap: 4px;
    padding: 0 4px;
}
.toolbar .overflow {
    align-self: stretch;
    height: auto;
    width: 12px;
    margin-left: 2px;
    flex-direction: column;
    justify-content: flex-end;
    padding-bottom: 2px;
    background: linear-gradient(#f2f2f2, #a6a6a6);
}
.overflow i {
    width: 7px;
    height: 2px;
    background: #000;
}
.overflow svg {
    width: 9px;
    height: 9px;
}
.combo {
    display: flex;
    align-items: center;
    height: 36px;
    background: #fff;
    border: 2px solid #dcdfe4;
    border-top-color: #b0b3ba;
}
.combo select {
    flex: 1;
    min-width: 0;
    height: 100%;
    appearance: none;
    font-family: "Liberation Mono", monospace;
    font-size: 22px;
}
.combo-scale {
    width: 166px;
    padding: 0 10px 0 2px;
}
.combo-percent {
    width: 67px;
    padding: 2px 9px 2px 2px;
    color: #606060;
    border-color: #b8babe;
}
.combo-percent select {
    text-indent: -8px;
    background: linear-gradient(90deg, #3399ff 22px, transparent 22px);
}

/* Menu bar */
.menubar {
    display: flex;
    gap: 1px;
    padding: 2px 3px 0;
    height: 43px;
}
.menubar > button, .menubar .active {
    padding: 0 10px;
    height: 41px;
}
.menu-open {
    position: relative;
}
.menubar .active {
    position: relative;
    z-index: 3;
    padding: 0 8px;
    background: #fbfbfb;
    border: 2px solid #8c8c8c;
    border-bottom: none;
    box-shadow: 3px 0 3px rgba(0, 0, 0, 0.2);
}
.menu {
    position: absolute;
    z-index: 2;
    left: 0;
    top: 39px;
    width: 295px;
    padding: 2px 0 3px;
    border: 2px solid #8c8c8c;
    background: linear-gradient(90deg, #f8f8f8, #ededed 46px, #fcfcfc 46px);
    box-shadow: 4px 4px 4px rgba(0, 0, 0, 0.3);
}
.menu button {
    display: flex;
    align-items: center;
    width: 100%;
    height: 42px;
    padding-right: 20px;
    gap: 9px;
    text-align: left;
    white-space: nowrap;
}
.menu button:disabled {
    color: #a2a2a2;
}
.menu .hover {
    background: #c0dcfa;
    box-shadow: inset 0 0 0 2px #3e9bf2;
}
.menu hr {
    height: 2px;
    margin-left: 56px;
    border: none;
    background: #c4c4c4;
}
.menu kbd {
    margin-left: auto;
    font: inherit;
}
.mi {
    display: flex;
    align-items: center;
    justify-content: center;
    width: 23px;
    height: 23px;
    margin: 0 11px 0 12px;
    flex: none;
}
.mi.boxed {
    background: #dcebfa;
    border: 2px solid #58a8f5;
}
.tooltip {
    position: absolute;
    z-index: 4;
    left: 259px;
    top: 133px;
    width: 219px;
    height: 241px;
    padding: 8px 4px;
    color: #505050;
    border: 2px solid #808080;
    border-radius: 2px;
    background: linear-gradient(#ffffff, #c9d8ef);
    box-shadow: 4px 4px 4px rgba(0, 0, 0, 0.35);
    white-space: nowrap;
}
.tooltip p {
    margin: 9px 0 0 8px;
    line-height: 35px;
}

/* Workspace */
.workspace {
    flex: 1;
    min-height: 0;
    display: flex;
    gap: 5px;
    padding-bottom: 10px;
    border-top: 2px solid #fafafa;
}
.toc {
    width: 675px;
    flex: none;
    display: flex;
    flex-direction: column;
}
.panel-title {
    display: flex;
    align-items: center;
    height: 40px;
    flex: none;
    padding-left: 4px;
    background: linear-gradient(90deg, #98b2d0, #b9d1ed);
}
.panel-title h2 {
    flex: 1;
}
.panel-title button {
    width: 18px;
}
.panel-title svg {
    width: 15px;
    height: 15px;
}
.toc-tools {
    height: 29px;
    padding-left: 4px;
    background: linear-gradient(#fcfcfc, #f0f0f0);
}
.tree {
    flex: 1;
    width: 672px;
    padding: 2px 0;
    list-style: none;
    background: #fff;
    border: 2px solid #828790;
    border-left-width: 1px;
}
.tree li {
    display: flex;
    align-items: center;
    height: 38px;
}
.tree .root {
    padding-left: 7px;
}
.tree .root svg {
    margin: 0 5px 0 6px;
}
.tree .layer {
    padding-left: 28px;
}
.tree .field {
    padding-left: 93px;
}
.tree .class {
    padding-left: 57px;
    gap: 12px;
}
.toggle {
    width: 14px;
    height: 14px;
    border: 1px solid #8e8e8e;
    border-radius: 2px;
    background: linear-gradient(#3b5ea8, #3b5ea8) center / 8px 2px no-repeat, linear-gradient(#fff, #ddd);
}
.tree input {
    display: flex;
    justify-content: center;
    appearance: none;
    width: 13px;
    height: 13px;
    margin: 0 6px 0 7px;
    border: 2px solid #222;
    background: #fff;
}
.tree input:checked::after {
    content: "";
    width: 4px;
    height: 7px;
    border: solid #000;
    border-width: 0 2px 2px 0;
    transform: rotate(40deg);
}
.tree label {
    padding: 0 3px;
}
.tree .selected {
    color: #fff;
    background: #3399ff;
    outline: 1px solid #666;
    outline-offset: 1px;
}
.swatch {
    width: 18px;
    height: 13px;
    border: 2px solid #6e6e6e;
}
.dark-green { background: #38a800; fill: #38a800; }
.lime { background: #b0e000; fill: #b0e000; }
.orange { background: #ffaa00; fill: #ffaa00; }
.red { background: #ff0000; fill: #ff0000; }
.pink { background: #eeccf8; }
.sky { background: #cbe6f8; }
.mint { background: #c8f2d0; }

/* Map */
.map-frame {
    flex: 1;
    min-width: 0;
    min-height: 0;
    display: grid;
    grid-template-columns: 1fr 36px;
    grid-template-rows: minmax(0, 1fr) 37px;
    column-gap: 2px;
    padding-right: 2px;
    border-left: 2px solid #808080;
    border-top: 2px solid #707070;
}
.map {
    width: 100%;
    height: 100%;
    background: #fdfefe;
}
.map polygon {
    stroke: #6e6e6e;
    stroke-width: 1;
    vector-effect: non-scaling-stroke;
}
.scroll-v {
    display: flex;
    flex-direction: column;
    background: #eeeeee;
    border-left: 1px solid #e0e0e0;
}
.scroll-v button, .scroll-h button, .map-bar > button {
    display: flex;
    align-items: center;
    justify-content: center;
    width: 36px;
    height: 36px;
    flex: none;
}
.scroll-v button svg {
    width: 13px;
    height: 8px;
}
.scroll-h button svg {
    width: 8px;
    height: 13px;
}
.track {
    flex: 1;
    display: flex;
}
.thumb {
    display: flex;
    align-items: center;
    justify-content: center;
    gap: 3px;
}
.scroll-v .track {
    flex-direction: column;
    padding-top: 275px;
}
.scroll-v .thumb {
    flex-direction: column;
    height: 482px;
    background: linear-gradient(90deg, #f4f4f4, #ececec 18%, #d8dadc 20%, #d8dadc 70%, #c2c2c8);
    border: 2px solid #a2a2a2;
    border-left: none;
}
.scroll-v .thumb i {
    width: 14px;
    height: 3px;
    background: #7a7a7a;
}
.map-bar {
    grid-column: 1 / 2;
    display: flex;
    align-items: center;
    border-top: 2px solid #f8f8f8;
    background: #f0f0f0;
}
.map-bar > button {
    width: 38px;
    height: 35px;
}
.map-bar > button svg {
    width: 11px;
    height: 11px;
}
.map-bar .view-on {
    background: linear-gradient(#cecece, #ebebeb);
    border: 2px solid #707070;
    border-radius: 4px;
}
.bar-sep {
    width: 2px;
    height: 34px;
    margin: 0 6px 0 2px;
    background: #a0a0a0;
}
.scroll-h {
    flex: 1;
    display: flex;
    background: #ebebeb;
}
.scroll-h .track {
    padding-left: 36%;
}
.scroll-h .thumb {
    width: 55%;
    background: linear-gradient(#f4f4f4, #e8e8e8 18%, #d4d4d6 20%, #d0d0d2 70%, #b8b8bc);
    border: 2px solid #a2a2a2;
    border-top: none;
}
.scroll-h .thumb i {
    width: 3px;
    height: 12px;
    background: #7a7a7a;
}

/* Prepare window */
.prepare {
    flex: none;
}
.prepare .panel-title {
    color: #4a525c;
    background: linear-gradient(90deg, #bccbda, #d6e4f1);
}
.filters {
    display: flex;
    align-items: flex-start;
    gap: 10px;
    height: 55px;
}
.filter-buttons {
    display: flex;
    gap: 8px;
    width: 659px;
}
.filter-buttons button {
    display: flex;
    align-items: center;
    gap: 4px;
    width: 140px;
    height: 24px;
    padding: 4px 2px 0 2px;
    border: 2px solid #6f6f6f;
    border-radius: 4px;
    background: linear-gradient(#cacaca, #ececec);
    line-height: 24px;
    white-space: nowrap;
}
.filter-buttons svg {
    margin-bottom: 4px;
}
.filters input {
    flex: 1;
    height: 42px;
    margin-top: 2px;
    padding: 0 4px 6px;
    font-size: 23px;
    background: #fff;
    border: 2px solid #e3e6ea;
    border-top-color: #ababab;
}
.filters input::placeholder {
    color: #6a6a6a;
}
.clear-find {
    width: 52px;
    padding-top: 6px;
}
.clear-find svg {
    width: 20px;
    height: 20px;
}
.results {
    width: calc(100% - 8px);
    table-layout: fixed;
    border-collapse: collapse;
    border: 2px solid #a0a0a0;
}
.c-icon {
    width: 45px;
}
.c-small {
    width: 182px;
}
.c-wide {
    width: 274px;
}
.results th {
    height: 47px;
    padding: 0 3px 3px;
    font-weight: normal;
    text-align: left;
    border-bottom: 2px solid #b0b0b0;
    background: linear-gradient(#a0a0a0, #a0a0a0) left center / 1px 40px no-repeat, #f0f0f0;
}
.results th:first-child {
    background: #f0f0f0;
}
.results td {
    height: 58px;
    padding-bottom: 10px;
    text-align: center;
    background: #fff;
}
.results-status {
    display: flex;
    width: calc(100% - 8px);
    height: 41px;
    font-size: 23px;
    line-height: 30px;
    border-bottom: 2px solid #fff;
}
.results-status > span {
    border-left: 1px solid #a0a0a0;
}
.results-status .state {
    flex: 1;
}
.results-status .count {
    width: 323px;
    text-align: center;
}
.results-status .only {
    display: flex;
    justify-content: flex-end;
    width: 769px;
    gap: 8px;
}
.results-status input {
    appearance: none;
    width: 22px;
    height: 22px;
    margin-top: 5px;
    border: 2px solid #9a9a9a;
    background: linear-gradient(135deg, #d4d8dc, #fafafa);
}

/* Status bar */
.statusbar {
    flex: none;
    display: flex;
    justify-content: flex-end;
    height: 43px;
    padding-top: 7px;
    border-bottom: 2px solid #5b7591;
}
.statusbar span {
    width: 625px;
}
```
